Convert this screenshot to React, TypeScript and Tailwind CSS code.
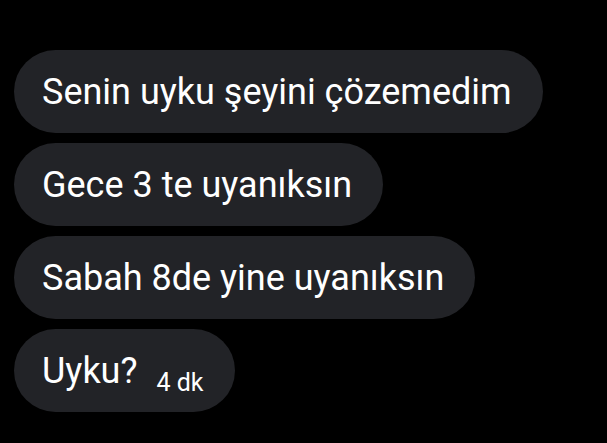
const messages = [
  "Senin uyku şeyini çözemedim",
  "Gece 3 te uyanıksın",
  "Sabah 8de yine uyanıksın",
];

function Bubble({ children }: { children: React.ReactNode }) {
  return (
    <div className="flex h-[83px] w-fit items-center rounded-full bg-[#222327] pl-[28px] pr-[31px] text-[36px] leading-none text-white">
      {children}
    </div>
  );
}

export default function App() {
  return (
    <div
      className="h-[443px] w-[607px] overflow-hidden bg-black pl-[14px] pt-[50px]"
      style={{ fontFamily: "Roboto, 'Liberation Sans', sans-serif" }}
    >
      <div className="flex flex-col gap-[10px]">
        {messages.map((m) => (
          <Bubble key={m}>{m}</Bubble>
        ))}
        <Bubble>
          <span className="flex items-baseline">
            <span>Uyku?</span>
            <span className="ml-[19px] translate-y-[8px] text-[25px]">4 dk</span>
          </span>
        </Bubble>
      </div>
    </div>
  );
}
